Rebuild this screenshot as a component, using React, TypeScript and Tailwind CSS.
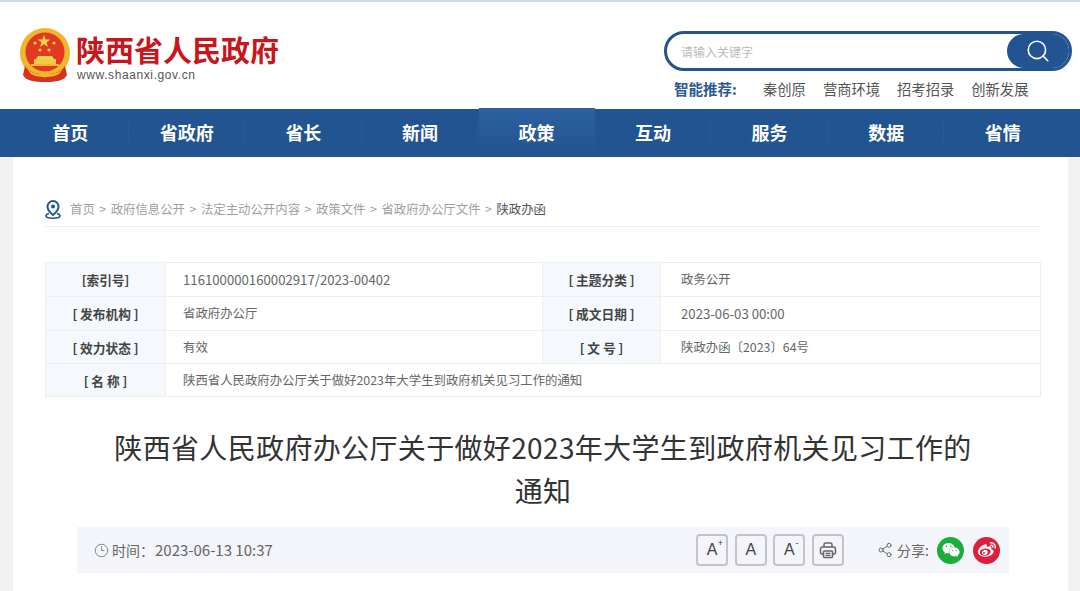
import React from 'react';
import { Clock3, Search, Share2 } from 'lucide-react';
import { FaWeibo, FaWeixin } from 'react-icons/fa';

const navItems = ['首页', '省政府', '省长', '新闻', '政策', '互动', '服务', '数据', '省情'];
const suggestions = ['秦创原', '营商环境', '招考招录', '创新发展'];
const crumbs = ['首页', '政府信息公开', '法定主动公开内容', '政策文件', '省政府办公厅文件'];

const Emblem = () => (
  <svg width="52" height="54" viewBox="0 0 52 54" className="shrink-0">
    <circle cx="26" cy="25" r="25" fill="#f0b62e" />
    <circle cx="26" cy="24" r="19.5" fill="#e23a22" />
    <polygon points="25,7 26.6,11.6 31.4,11.6 27.5,14.4 29,19 25,16.2 21,19 22.5,14.4 18.6,11.6 23.4,11.6" fill="#f7d34a" />
    <circle cx="16" cy="15" r="1.6" fill="#f7d34a" />
    <circle cx="35" cy="15" r="1.6" fill="#f7d34a" />
    <circle cx="21" cy="22" r="1.6" fill="#f7d34a" />
    <circle cx="30" cy="22" r="1.6" fill="#f7d34a" />
    <path d="M19 28h14l2 3H17z" fill="#f7d34a" />
    <rect x="15" y="31" width="22" height="5" fill="#f5c94a" />
    <rect x="12" y="36" width="28" height="2" fill="#f0b62e" />
    <path d="M6 38c4 7 12 8 20 8s16-1 20-8l2 9c-3 6-11 7-22 7s-19-1-22-7z" fill="#d8321e" />
    <path d="M9 42c5 4 11 4 17 4s12 0 17-4l-2 3c-3 3-9 4-15 4s-12-1-15-4z" fill="#f0b62e" />
    <circle cx="26" cy="47" r="2.500" fill="#f0b62e" />
  </svg>
);

const PinIcon = () => (
  <svg width="16" height="19" viewBox="0 0 16 19" className="shrink-0">
    <path d="M8 1a5.500 5.500 0 0 0-5.500 5.500C2.500 10.500 8 15 8 15s5.500-4.500 5.500-8.500A5.500 5.500 0 0 0 8 1z" fill="none" stroke="#215490" strokeWidth="2" />
    <circle cx="8" cy="6.500" r="2" fill="#215490" />
    <path d="M4 13.500C2 14 1 15 1 16c0 1.300 3 2.200 7 2.200s7-.9 7-2.200c0-1-1-2-3-2.500" fill="none" stroke="#215490" strokeWidth="1.600" />
  </svg>
);

const PrinterIcon = () => (
  <svg width="18" height="18" viewBox="0 0 18 18" fill="none" stroke="#666666" strokeWidth="1.500">
    <path d="M5 6V3.500A1.500 1.500 0 0 1 6.500 2h5A1.500 1.500 0 0 1 13 3.500V6" />
    <path d="M4.500 13H3a1.500 1.500 0 0 1-1.500-1.500V8A2 2 0 0 1 3.500 6h11a2 2 0 0 1 2 2v3.500A1.500 1.500 0 0 1 15 13h-1.500" />
    <rect x="4.500" y="10" width="9" height="6.500" rx="1" />
    <path d="M6.500 12.300h5M6.500 14.300h5" strokeWidth="1.200" />
  </svg>
);

const Label = ({ children }: { children: React.ReactNode }) => (
  <td className="border border-[#eeeeee] bg-[#f5f9fd] text-center text-[12.700px] font-bold text-[#444444]">{children}</td>
);

const Value = ({ children, span, right }: { children: React.ReactNode; span?: number; right?: boolean }) => (
  <td colSpan={span} className={right ? 'border border-[#eeeeee] pl-[20px] text-[12.400px] text-[#666666]' : 'border border-[#eeeeee] pl-[17px] text-[12.400px] text-[#666666]'}>
    {children}
  </td>
);

const ToolButton = ({ children }: { children: React.ReactNode }) => (
  <button className="relative flex h-8 w-8 items-center justify-center rounded-[4px] border-2 border-[#c4c4c8] font-['Liberation_Sans',sans-serif] text-[#444444]">
    {children}
  </button>
);

export default function App() {
  return (
    <div className="h-[591px] overflow-hidden bg-[#f1f1f1] font-['Noto_Sans_CJK_SC','Noto_Sans',sans-serif]">
      <header className="h-[109px] border-t-2 border-[#c3e0ee] bg-white">
        <div className="flex justify-between pl-[19px] pr-[8px]">
          <div className="mt-[26px] flex items-start gap-[5px]">
            <Emblem />
            <div>
              <div className="text-[29px] font-bold leading-[42px] text-[#c8161d]">陕西省人民政府</div>
              <div className="ml-px mt-[-2px] font-['Liberation_Sans',sans-serif] text-[12px] leading-[14px] tracking-[0.6px] text-[#555555]">
                www.shaanxi.gov.cn
              </div>
            </div>
          </div>
          <div className="mt-[29px] w-[408px]">
            <div className="flex h-[40px] items-center justify-between rounded-full border-[3px] border-[#215490] pl-[14px]">
              <span className="pt-[2px] text-[12px] text-[#bbbbbb]">请输入关键字</span>
              <button className="flex h-[34px] w-[62px] items-center justify-center rounded-full bg-[#215490]">
                <Search size={26} strokeWidth={1.5} className="text-white" />
              </button>
            </div>
            <div className="mt-[8px] flex h-[20px] items-center pl-[10px] text-[14.3px] leading-5 text-[#555555]">
              <span className="mr-[25px] w-[64px] whitespace-nowrap text-[14.500px] font-bold text-[#2b5a92]">智能推荐:</span>
              <div className="flex gap-[17px]">
                {suggestions.map(s => (
                  <span key={s}>{s}</span>
                ))}
              </div>
            </div>
          </div>
        </div>
      </header>

      <nav className="h-[48px] bg-[#215490] pl-3">
        <ul className="grid h-full w-[1049px] grid-cols-9">
          {navItems.map((item, i) => (
            <li key={item} className="relative flex items-center justify-center pb-[2px]">
              {item === '政策' && <div className="absolute bottom-0 left-px right-0 top-[-1px] bg-gradient-to-b from-[#2c609f] to-[#215490]" />}
              <span className="relative text-[18px] font-bold text-white">{item}</span>
              {i < navItems.length - 1 && <span className="absolute right-0 top-[14px] h-[18px] w-px bg-[#2d5c93]" />}
            </li>
          ))}
        </ul>
      </nav>

      <main className="mx-[13px] h-[434px] w-[1055px] bg-white pl-8 pr-[27px] pt-[36px]">
        <div className="flex h-[34px] items-center gap-[9px] border-b border-[#eeeeee] text-[12.400px] text-[#a0a0a0]">
          <PinIcon />
          <div className="flex gap-[4.500px]">
            {crumbs.map(c => (
              <React.Fragment key={c}>
                <span>{c}</span>
                <span>&gt;</span>
              </React.Fragment>
            ))}
            <span className="text-[#555555]">陕政办函</span>
          </div>
        </div>

        <table className="mt-[35px] h-[135px] w-[996px] table-fixed border-collapse">
          <colgroup>
            <col className="w-[120px]" />
            <col className="w-[377px]" />
            <col className="w-[118px]" />
            <col />
          </colgroup>
          <tbody>
            <tr>
              <Label>[索引号]</Label>
              <Value><span className="text-[13.200px]">116100000160002917/2023-00402</span></Value>
              <Label>[ 主题分类 ]</Label>
              <Value right>政务公开</Value>
            </tr>
            <tr>
              <Label>[ 发布机构 ]</Label>
              <Value>省政府办公厅</Value>
              <Label>[ 成文日期 ]</Label>
              <Value right><span className="text-[13.200px]">2023-06-03 00:00</span></Value>
            </tr>
            <tr>
              <Label>[ 效力状态 ]</Label>
              <Value>有效</Value>
              <Label>[ 文 号 ]</Label>
              <Value right>陕政办函〔2023〕64号</Value>
            </tr>
            <tr>
              <Label>[ 名 称 ]</Label>
              <Value span={3}>陕西省人民政府办公厅关于做好2023年大学生到政府机关见习工作的通知</Value>
            </tr>
          </tbody>
        </table>

        <h1 className="ml-[69px] mt-[29px] w-[858px] text-center text-[28px] font-normal leading-[43px] tracking-[0.35px] text-[#333333]">
          陕西省人民政府办公厅关于做好2023年大学生到政府机关见习工作的通知
        </h1>

        <div className="ml-[32px] mt-[15px] flex h-[46px] w-[932px] items-center justify-between bg-[#f3f5fb] pl-[17px] pr-[9px] text-[14px] text-[#666666]">
          <div className="flex items-center gap-[3px]">
            <Clock3 size={15} strokeWidth={1.6} className="text-[#888888]" />
            <span>时间：<span className="ml-px text-[15px]">2023-06-13 10:37</span></span>
          </div>
          <div className="flex items-center">
            <div className="mr-[33px] flex gap-[6.700px]">
              <ToolButton>
                <span className="text-[16px] leading-none">A</span>
                <span className="absolute right-[3px] top-[3px] text-[9px] leading-none">+</span>
              </ToolButton>
              <ToolButton>
                <span className="text-[16px] leading-none">A</span>
              </ToolButton>
              <ToolButton>
                <span className="text-[16px] leading-none">A</span>
                <span className="absolute right-[5px] top-[3px] text-[9px] leading-none">-</span>
              </ToolButton>
              <ToolButton>
                <PrinterIcon />
              </ToolButton>
            </div>
            <Share2 size={16} strokeWidth={1.4} className="mr-[4px] text-[#666666]" />
            <span className="mr-[8px]">分享:</span>
            <span className="mr-[9px] flex h-[27px] w-[27px] items-center justify-center rounded-full bg-[#1aad3a]">
              <FaWeixin size={18} className="text-white" />
            </span>
            <span className="flex h-[27px] w-[27px] items-center justify-center rounded-full bg-[#de1f3c]">
              <FaWeibo size={18} className="text-white" />
            </span>
          </div>
        </div>
      </main>
    </div>
  );
}
